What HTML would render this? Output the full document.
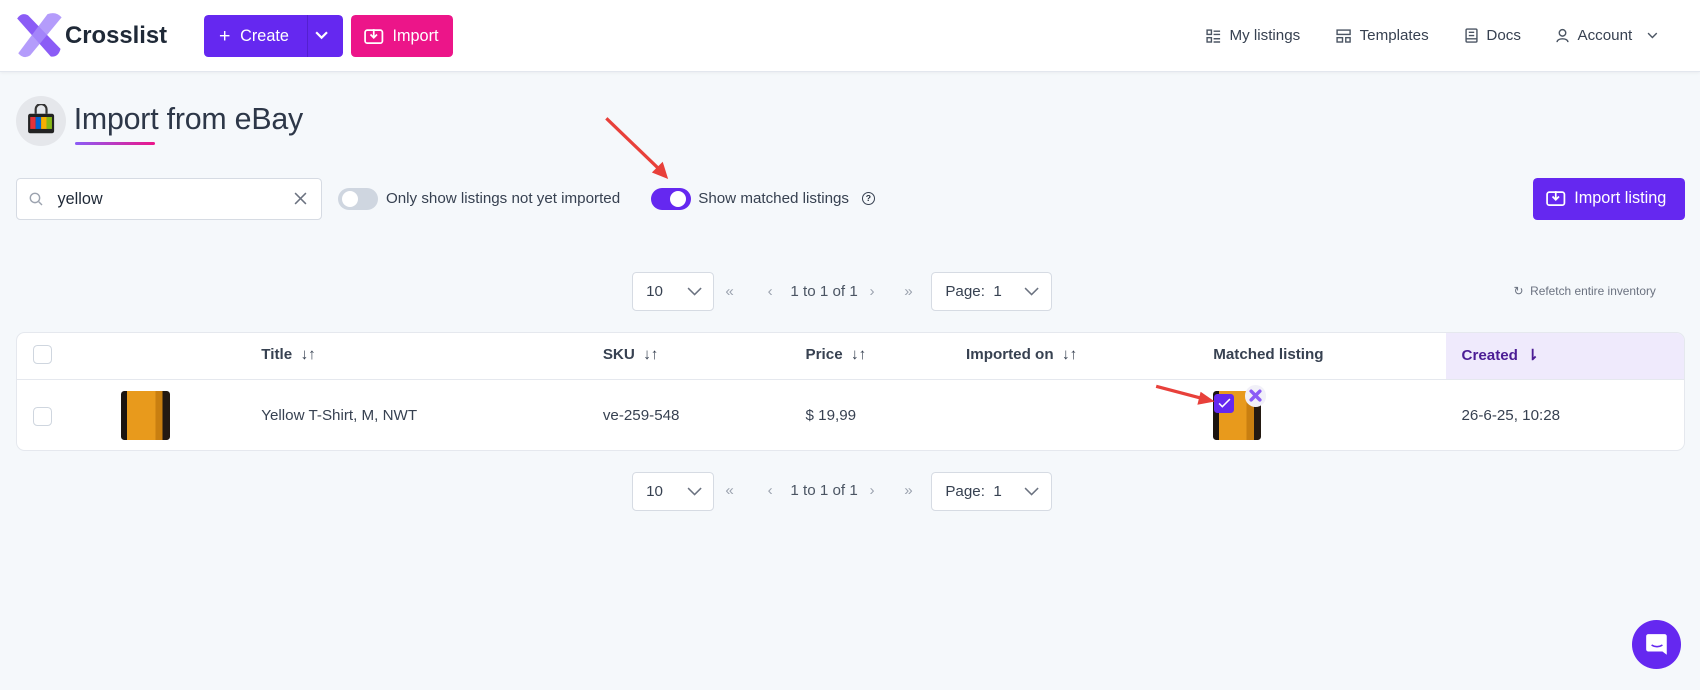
<!DOCTYPE html>
<html><head><meta charset="utf-8"><style>
*{box-sizing:border-box;margin:0;padding:0}
html,body{width:1700px;height:690px;overflow:hidden}
body{background:#f5f8fb;font-family:"Liberation Sans",sans-serif;color:#1f2937}
#w{zoom:1.0842;width:1568px;height:636px;position:relative}
.a{position:absolute}
.hdr{left:0;top:0;width:1568px;height:66px;background:#fff;border-bottom:1px solid #e3e7ee;box-shadow:0 1px 3px rgba(0,0,0,.05)}
.btn{border-radius:4px;color:#fff;font-size:15px;display:flex;align-items:center}
.nav{font-size:14px;color:#374151;display:flex;align-items:center;gap:8px}
.sel{background:#fff;border:1px solid #d6dbe3;border-radius:4px;height:36px;font-size:14px;display:flex;align-items:center;padding-left:12px;color:#374151}
.pg{font-size:14px;color:#4b5563}
.th{font-size:14px;font-weight:bold;color:#374151;top:319px}
.td{font-size:14px;color:#374151;top:375px}
.cb{width:18px;height:18px;border:1px solid #cfd6df;border-radius:4px;background:#fff}
.shirt{background:linear-gradient(90deg,#1b1410 0 12%,#e89a1c 12% 70%,#c97f10 70% 85%,#241a12 85%);border-radius:3px}
</style></head><body><div id="w">
<div class="a hdr"></div>
<svg class="a" style="left:14px;top:11px" width="46" height="44" viewBox="0 0 46 44"><path d="M2 6 Q6 0 12 3 L42 34 Q40 42 33 41 Z" fill="#8b5cf6"/><path d="M30 2 Q38 -1 43 5 L14 40 Q8 44 3 38 Z" fill="#a78bfa" opacity=".85"/></svg>
<div class="a" style="left:60px;top:20px;font-size:22px;font-weight:bold;color:#1f2937">Crosslist</div>
<div class="a btn" style="left:188px;top:14px;width:128px;height:39px;background:#6528f0"><span style="margin-left:14px;font-size:18px">+</span><span style="margin-left:9px">Create</span><span style="position:absolute;left:95px;top:0;height:39px;border-left:1px solid #5420d0"></span><svg style="position:absolute;left:102px;top:13px" width="14" height="12" viewBox="0 0 14 12"><path d="M2 3l5 5 5-5" stroke="#fff" stroke-width="2" fill="none"/></svg></div>
<div class="a btn" style="left:324px;top:14px;width:94px;height:39px;background:#ec1589"><svg style="margin-left:12px" width="18" height="16" viewBox="0 0 18 16"><rect x="1" y="2" width="16" height="12" rx="2" stroke="#fff" stroke-width="1.6" fill="none"/><path d="M9 1v8M6 6l3 3 3-3" stroke="#fff" stroke-width="1.6" fill="none"/></svg><span style="margin-left:8px">Import</span></div>
<div class="a nav" style="left:1112px;top:25px"><svg width="14" height="13"><g stroke="#4b5563" fill="none" stroke-width="1.3"><rect x="1" y="1" width="4" height="4"/><rect x="1" y="8" width="4" height="4"/><path d="M7 2h6M7 5h6M7 9h6M7 12h6"/></g></svg>My listings</div>
<div class="a nav" style="left:1232px;top:25px"><svg width="14" height="13"><g stroke="#4b5563" fill="none" stroke-width="1.3"><rect x="1" y="1" width="12" height="4"/><rect x="1" y="8" width="5" height="4"/><rect x="9" y="8" width="4" height="4"/></g></svg>Templates</div>
<div class="a nav" style="left:1351px;top:25px"><svg width="12" height="14"><g stroke="#4b5563" fill="none" stroke-width="1.3"><rect x="1" y="1" width="10" height="12" rx="1"/><path d="M3.5 4h5M3.5 7h5M1 10h10"/></g></svg>Docs</div>
<div class="a nav" style="left:1435px;top:25px"><svg width="12" height="14"><g stroke="#4b5563" fill="none" stroke-width="1.3"><circle cx="6" cy="4.5" r="3"/><path d="M1 13c0-4 10-4 10 0"/></g></svg>Account<svg style="margin-left:6px" width="10" height="8"><path d="M1 2l4 4 4-4" stroke="#4b5563" fill="none" stroke-width="1.3"/></svg></div>

<div class="a" style="left:15px;top:89px;width:46px;height:46px;border-radius:50%;background:#e5e7eb"></div>
<svg class="a" style="left:25px;top:96px" width="26" height="30"><path d="M8 9V5a5 5 0 0110 0v4" stroke="#333" stroke-width="2" fill="none"/><rect x="1" y="9" width="24" height="18" rx="2" fill="#222"/><rect x="3" y="12" width="5" height="11" fill="#e53238"/><rect x="8" y="12" width="5" height="11" fill="#0064d2"/><rect x="13" y="12" width="5" height="11" fill="#f5af02"/><rect x="18" y="12" width="5" height="11" fill="#86b817"/></svg>
<div class="a" style="left:68px;top:95px;font-size:28px;color:#2d3748;letter-spacing:-0.2px">Import from eBay</div>
<div class="a" style="left:69px;top:131px;width:74px;height:3px;border-radius:2px;background:linear-gradient(90deg,#8b5cf6,#ec1589)"></div>

<div class="a" style="left:15px;top:164px;width:282px;height:39px;background:#fff;border:1px solid #d6dbe3;border-radius:4px"></div>
<svg class="a" style="left:27px;top:177px" width="13" height="13"><circle cx="5.5" cy="5.5" r="4.3" stroke="#9ca3af" fill="none" stroke-width="1.3"/><path d="M9 9l3 3" stroke="#9ca3af" stroke-width="1.3"/></svg>
<div class="a" style="left:53px;top:175px;font-size:15px;color:#1f2937">yellow</div>
<svg class="a" style="left:271px;top:177px" width="12" height="12"><path d="M1 1l10 10M11 1L1 11" stroke="#6b7280" stroke-width="1.4"/></svg>
<div class="a" style="left:312px;top:173px;width:37px;height:21px;border-radius:11px;background:#cfd6e0"></div>
<div class="a" style="left:315px;top:176px;width:15px;height:15px;border-radius:50%;background:#fff"></div>
<div class="a" style="left:356px;top:175px;font-size:14px;color:#374151">Only show listings not yet imported</div>
<div class="a" style="left:600px;top:173px;width:37px;height:21px;border-radius:11px;background:#6528f0"></div>
<div class="a" style="left:618px;top:176px;width:15px;height:15px;border-radius:50%;background:#fff"></div>
<div class="a" style="left:644px;top:175px;font-size:14px;color:#374151">Show matched listings</div>
<div class="a" style="left:795px;top:177px;width:12px;height:12px;border:1.3px solid #374151;border-radius:50%;font-size:8px;text-align:center;line-height:10px;font-weight:bold">?</div>
<svg class="a" style="left:555px;top:105px" width="65" height="62"><path d="M4 4L56 54" stroke="#e8403a" stroke-width="3"/><path d="M61 60L46 54 56 44Z" fill="#e8403a"/></svg>
<div class="a btn" style="left:1414px;top:164px;width:140px;height:39px;background:#6528f0"><svg style="margin-left:12px" width="18" height="16" viewBox="0 0 18 16"><rect x="1" y="2" width="16" height="12" rx="2" stroke="#fff" stroke-width="1.6" fill="none"/><path d="M9 1v8M6 6l3 3 3-3" stroke="#fff" stroke-width="1.6" fill="none"/></svg><span style="margin-left:8px">Import listing</span></div>

<div class="a sel" style="left:583px;top:251px;width:76px">10<svg style="position:absolute;left:50px;top:13px" width="14" height="9"><path d="M1 1l6 6 6-6" stroke="#6b7280" fill="none" stroke-width="1.4"/></svg></div>
<div class="a pg" style="left:669px;top:261px;color:#9ca3af">«</div>
<div class="a pg" style="left:708px;top:261px;color:#9ca3af">‹</div>
<div class="a pg" style="left:729px;top:261px">1 to 1 of 1</div>
<div class="a pg" style="left:802px;top:261px;color:#9ca3af">›</div>
<div class="a pg" style="left:834px;top:261px;color:#9ca3af">»</div>
<div class="a sel" style="left:859px;top:251px;width:111px">Page:&nbsp; 1<svg style="position:absolute;left:85px;top:13px" width="14" height="9"><path d="M1 1l6 6 6-6" stroke="#6b7280" fill="none" stroke-width="1.4"/></svg></div>
<div class="a" style="left:1396px;top:262px;font-size:11px;color:#6b7280">↻&nbsp; Refetch entire inventory</div>

<div class="a sel" style="left:583px;top:435px;width:76px">10<svg style="position:absolute;left:50px;top:13px" width="14" height="9"><path d="M1 1l6 6 6-6" stroke="#6b7280" fill="none" stroke-width="1.4"/></svg></div>
<div class="a pg" style="left:669px;top:445px;color:#9ca3af">«</div>
<div class="a pg" style="left:708px;top:445px;color:#9ca3af">‹</div>
<div class="a pg" style="left:729px;top:445px">1 to 1 of 1</div>
<div class="a pg" style="left:802px;top:445px;color:#9ca3af">›</div>
<div class="a pg" style="left:834px;top:445px;color:#9ca3af">»</div>
<div class="a sel" style="left:859px;top:435px;width:111px">Page:&nbsp; 1<svg style="position:absolute;left:85px;top:13px" width="14" height="9"><path d="M1 1l6 6 6-6" stroke="#6b7280" fill="none" stroke-width="1.4"/></svg></div>

<div class="a" style="left:15px;top:306px;width:1539px;height:110px;background:#fff;border:1px solid #e5e8ee;border-radius:8px;overflow:hidden">
<div class="a" style="left:1318px;top:0;width:221px;height:43px;background:#efeafc"></div>
<div class="a" style="left:0;top:43px;width:1539px;border-top:1px solid #e5e8ee"></div>
</div>
<div class="a cb" style="left:30px;top:318px"></div>
<div class="a th" style="left:241px">Title&nbsp; ↓↑</div>
<div class="a th" style="left:556px">SKU&nbsp; ↓↑</div>
<div class="a th" style="left:743px">Price&nbsp; ↓↑</div>
<div class="a th" style="left:891px">Imported on&nbsp; ↓↑</div>
<div class="a th" style="left:1119px">Matched listing</div>
<div class="a th" style="left:1348px;color:#4c1d95">Created&nbsp; ⇂</div>
<div class="a cb" style="left:30px;top:375px"></div>
<div class="a shirt" style="left:112px;top:361px;width:45px;height:45px"></div>
<div class="a td" style="left:241px">Yellow T-Shirt, M, NWT</div>
<div class="a td" style="left:556px">ve-259-548</div>
<div class="a td" style="left:743px">$ 19,99</div>
<div class="a shirt" style="left:1119px;top:361px;width:44px;height:45px"></div>
<div class="a" style="left:1120px;top:363px;width:18px;height:18px;background:#6528f0;border-radius:3px"></div>
<svg class="a" style="left:1123px;top:367px" width="12" height="10"><path d="M1 5l3 3 7-7" stroke="#fff" fill="none" stroke-width="1.4"/></svg>
<div class="a" style="left:1148px;top:355px;width:20px;height:20px;border-radius:50%;background:#f1f0f8"></div>
<svg class="a" style="left:1152px;top:359px" width="12" height="12"><path d="M2 2l8 8M10 2l-8 8" stroke="#8b5cf6" stroke-width="3.2" stroke-linecap="round"/></svg>
<svg class="a" style="left:1064px;top:352px" width="60" height="24"><path d="M2 4L44 15" stroke="#e8403a" stroke-width="3"/><path d="M56 18L40 21 43 9Z" fill="#e8403a"/></svg>
<div class="a td" style="left:1348px">26-6-25, 10:28</div>

<div class="a" style="left:1505px;top:572px;width:45px;height:45px;border-radius:50%;background:#6528f0"></div>
<svg class="a" style="left:1516px;top:583px" width="23" height="24"><path d="M4 2h15a2 2 0 012 2v17l-4-3H4a2 2 0 01-2-2V4a2 2 0 012-2z" fill="#fff"/><path d="M7 12c3 2 7 2 10 0" stroke="#6528f0" stroke-width="1.5" fill="none"/></svg>
</div></body></html>
